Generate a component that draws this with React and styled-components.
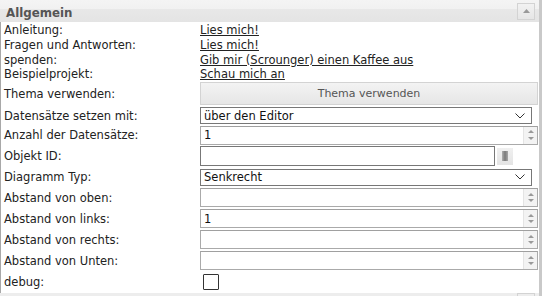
import React from "react";
import styled, { createGlobalStyle } from "styled-components";

const Global = createGlobalStyle`
  html, body { margin: 0; padding: 0; background: #fff; }
  body { width: 542px; height: 296px; overflow: hidden; font-family: "DejaVu Sans", Verdana, sans-serif; font-size: 11.5px; color: #222; }
`;

const Page = styled.div`
  width: 542px;
  height: 296px;
  box-sizing: border-box;
  border-right: 3px solid #c9c9c9;
  display: flex;
  flex-direction: column;
  overflow: hidden;
`;

const Header = styled.div`
  height: 22px;
  flex: none;
  display: flex;
  align-items: center;
  justify-content: space-between;
  padding: 0 4px 0 6px;
  background: linear-gradient(#f4f4f4 0, #f1f1f1 40%, #e8e8e8 42%, #e4e4e4 100%);
`;

const Title = styled.span`
  font-weight: bold;
  font-size: 11.8px;
  color: #555;
  padding-top: 3px;
`;

const IconButton = styled.div`
  width: 16px;
  height: 15px;
  border: 1px solid #d3d3d3;
  background: linear-gradient(#f2f2f2, #e6e6e6);
  display: flex;
  align-items: center;
  justify-content: center;
`;

const Content = styled.div`
  flex: 1;
  border-left: 1px solid #a8a8a8;
  display: flex;
  flex-direction: column;
`;

const Row = styled.div`
  height: ${(p) => p.$h}px;
  display: grid;
  grid-template-columns: 196px 1fr;
  align-items: center;
  padding-left: 3px;
`;

const Label = styled.span`
  white-space: nowrap;
`;

const Link = styled.a`
  color: #222;
  text-decoration: underline;
  white-space: nowrap;
`;

const WideButton = styled.div`
  height: 21px;
  margin-right: 1px;
  border: 1px solid #d3d3d3;
  background: linear-gradient(#f3f3f3, #e6e6e6);
  color: #555;
  font-size: 11px;
  display: flex;
  align-items: center;
  justify-content: center;
`;

const Select = styled.div`
  height: 15px;
  margin-right: 7px;
  border: 1px solid #777;
  display: flex;
  align-items: center;
  justify-content: space-between;
  padding: 0 6px 0 3px;
  color: #111;
`;

const NumberBox = styled.div`
  height: 17px;
  margin-right: 1px;
  border: 1px solid #aaa;
  border-top-color: #a0a0a0;
  display: flex;
  align-items: stretch;
  justify-content: space-between;
  color: #111;
`;

const NumberValue = styled.span`
  display: flex;
  align-items: center;
  padding-left: 3px;
`;

const Spinner = styled.div`
  width: 13px;
  display: flex;
  flex-direction: column;
  align-items: center;
  justify-content: space-evenly;
  background: #f3f3f3;
  border-left: 1px solid #e4e4e4;
`;

const TextWithButton = styled.div`
  display: flex;
  align-items: center;
  gap: 2px;
`;

const TextBox = styled.div`
  width: 293px;
  height: 18px;
  border: 1px solid #777;
`;

const SmallButton = styled.div`
  width: 16px;
  height: 17px;
  background: linear-gradient(#f0f0f0, #e4e4e4);
  display: flex;
  align-items: center;
  justify-content: center;
`;

const Glyph = styled.div`
  width: 6px;
  height: 10px;
  background: linear-gradient(90deg, #b0b0b0, #7a7a7a 50%, #a8a8a8);
`;

const Checkbox = styled.div`
  width: 14px;
  height: 14px;
  margin-left: 3px;
  border: 1px solid #333;
  border-radius: 1px;
`;

const NextHeader = styled.div`
  height: 3px;
  flex: none;
  background: #ededed;
  display: flex;
  justify-content: flex-end;
  padding-right: 4px;
`;

const NextButtonEdge = styled.div`
  width: 18px;
  height: 3px;
  border: 1px solid #d3d3d3;
  border-bottom: none;
  box-sizing: border-box;
`;

const Tri = ({ up = true, color = "#999", w = 7, h = 4 }) => (
  <svg width={w} height={h} viewBox={`0 0 ${w} ${h}`}>
    <polygon points={up ? `0,${h} ${w},${h} ${w / 2},0` : `0,0 ${w},0 ${w / 2},${h}`} fill={color} />
  </svg>
);

const Chevron = () => (
  <svg width="10" height="6" viewBox="0 0 10 6">
    <polyline points="0.5,0.5 5,5 9.5,0.5" fill="none" stroke="#333" strokeWidth="1" />
  </svg>
);

const Num = ({ value }) => (
  <NumberBox>
    <NumberValue>{value}</NumberValue>
    <Spinner>
      <Tri up w={6} h={3} />
      <Tri up={false} w={6} h={3} />
    </Spinner>
  </NumberBox>
);

export default function App() {
  return (
    <>
      <Global />
      <Page>
        <Header>
          <Title>Allgemein</Title>
          <IconButton>
            <Tri up color="#999" w={7} h={4} />
          </IconButton>
        </Header>
        <Content>
          <Row $h={15}>
            <Label>Anleitung:</Label>
            <Link>Lies mich!</Link>
          </Row>
          <Row $h={15}>
            <Label>Fragen und Antworten:</Label>
            <Link>Lies mich!</Link>
          </Row>
          <Row $h={15}>
            <Label>spenden:</Label>
            <Link>Gib mir (Scrounger) einen Kaffee aus</Link>
          </Row>
          <Row $h={14}>
            <Label>Beispielprojekt:</Label>
            <Link>Schau mich an</Link>
          </Row>
          <Row $h={25}>
            <Label>Thema verwenden:</Label>
            <WideButton>Thema verwenden</WideButton>
          </Row>
          <Row $h={19}>
            <Label>Datensätze setzen mit:</Label>
            <Select>
              <span>über den Editor</span>
              <Chevron />
            </Select>
          </Row>
          <Row $h={20}>
            <Label>Anzahl der Datensätze:</Label>
            <Num value="1" />
          </Row>
          <Row $h={22}>
            <Label>Objekt ID:</Label>
            <TextWithButton>
              <TextBox />
              <SmallButton>
                <Glyph />
              </SmallButton>
            </TextWithButton>
          </Row>
          <Row $h={20}>
            <Label>Diagramm Typ:</Label>
            <Select>
              <span>Senkrecht</span>
              <Chevron />
            </Select>
          </Row>
          <Row $h={21}>
            <Label>Abstand von oben:</Label>
            <Num value="" />
          </Row>
          <Row $h={21}>
            <Label>Abstand von links:</Label>
            <Num value="1" />
          </Row>
          <Row $h={21}>
            <Label>Abstand von rechts:</Label>
            <Num value="" />
          </Row>
          <Row $h={21}>
            <Label>Abstand von Unten:</Label>
            <Num value="" />
          </Row>
          <Row $h={22}>
            <Label>debug:</Label>
            <Checkbox />
          </Row>
        </Content>
        <NextHeader>
          <NextButtonEdge />
        </NextHeader>
      </Page>
    </>
  );
}
